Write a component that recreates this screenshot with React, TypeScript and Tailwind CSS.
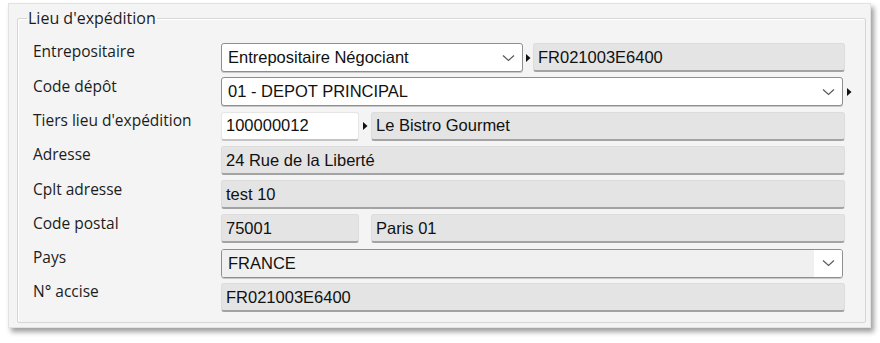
import React from 'react';

// Fonts: labels look like a Windows UI font, field values like Arial
const labelFont = { fontFamily: '"Open Sans", "Noto Sans", sans-serif' };
const valueFont = { fontFamily: '"Liberation Sans", Arial, sans-serif' };

function Chevron() {
  return (
    <svg width="13" height="8" viewBox="0 0 13 8" className="shrink-0">
      <path d="M1 1.5 L6.5 6.5 L12 1.5" fill="none" stroke="#5a5a5a" strokeWidth="1.2" />
    </svg>
  );
}

function Arrow() {
  return (
    <svg width="5" height="8" viewBox="0 0 5 8" className="shrink-0">
      <polygon points="0,0 4.5,4 0,8" fill="#111" />
    </svg>
  );
}

function Grey({ children, className = '' }: { children?: React.ReactNode; className?: string }) {
  return (
    <div
      style={valueFont}
      className={`h-[29px] flex items-center px-[4px] bg-[#e4e4e4] rounded-[3px] border border-[#dcdcdc] border-b-2 border-b-[#a3a3a3] text-[16.5px] text-[#111] whitespace-nowrap ${className}`}
    >
      {children}
    </div>
  );
}

function Select({ children, className = '' }: { children?: React.ReactNode; className?: string }) {
  return (
    <div
      style={valueFont}
      className={`h-[29px] flex items-center pl-[6px] pr-[7px] bg-white rounded-[3px] border border-[#8e8e8e] shadow-[0_1px_0_#c8c8c8] text-[16.5px] text-[#111] whitespace-nowrap ${className}`}
    >
      <span className="flex-1">{children}</span>
      <Chevron />
    </div>
  );
}

function Row({ label, children }: { label: string; children: React.ReactNode }) {
  return (
    <div className="flex items-center h-[29px]">
      <div style={labelFont} className="w-[188px] shrink-0 pb-[11px] text-[15.5px] text-[#1c1c1c] whitespace-nowrap">
        {label}
      </div>
      <div className="flex-1 flex items-center">{children}</div>
    </div>
  );
}

export default function App() {
  return (
    <div className="w-[880px] h-[343px] bg-white pt-[3px] pl-[8px]">
      <div className="w-[863px] h-[325px] bg-[#f4f4f4] border border-[#e2e2e2] shadow-[3px_4px_5px_rgba(0,0,0,0.38)] flex">
        <fieldset className="flex-1 ml-[8px] mr-[4px] mt-[3px] mb-[4px] border border-[#d6d6d6] shadow-[inset_1px_1px_0_#ffffff] rounded-[2px] pl-[15px] pr-[20px] pt-[14px] pb-[8px]">
          <legend style={labelFont} className="-ml-[6px] px-[1px] text-[16px] leading-[22px] text-[#1c1c1c]">
            Lieu d'expédition
          </legend>
          <div className="flex flex-col gap-[5.3px]">
            <Row label="Entrepositaire">
              <Select className="w-[302px]">Entrepositaire Négociant</Select>
              <div className="w-[10px] flex justify-center"><Arrow /></div>
              <Grey className="flex-1">FR021003E6400</Grey>
            </Row>
            <Row label="Code dépôt">
              <Select className="flex-1">01 - DEPOT PRINCIPAL</Select>
              <div className="w-[9px] flex justify-end mr-[-7px]"><Arrow /></div>
            </Row>
            <Row label="Tiers lieu d'expédition">
              <div
                style={valueFont}
                className="h-[29px] w-[138px] flex items-center px-[4px] bg-white rounded-[3px] border border-[#e6e6e6] border-b-2 border-b-[#c4c4c4] text-[16.5px] text-[#111]"
              >
                100000012
              </div>
              <div className="w-[12px] flex justify-center"><Arrow /></div>
              <Grey className="flex-1">Le Bistro Gourmet</Grey>
            </Row>
            <Row label="Adresse">
              <Grey className="flex-1">24 Rue de la Liberté</Grey>
            </Row>
            <Row label="Cplt adresse">
              <Grey className="flex-1">test 10</Grey>
            </Row>
            <Row label="Code postal">
              <Grey className="w-[138px]">75001</Grey>
              <div className="w-[12px]" />
              <Grey className="flex-1">Paris 01</Grey>
            </Row>
            <Row label="Pays">
              <div
                style={valueFont}
                className="flex-1 mr-[2px] h-[29px] flex items-stretch rounded-[3px] border border-[#8e8e8e] shadow-[0_1px_0_#c8c8c8] overflow-hidden text-[16.5px] text-[#111]"
              >
                <div className="flex-1 flex items-center pl-[6px] bg-[#f0f0f0]">FRANCE</div>
                <div className="w-[28px] bg-white flex items-center justify-center">
                  <Chevron />
                </div>
              </div>
            </Row>
            <Row label="N° accise">
              <Grey className="flex-1">FR021003E6400</Grey>
            </Row>
          </div>
        </fieldset>
      </div>
    </div>
  );
}
